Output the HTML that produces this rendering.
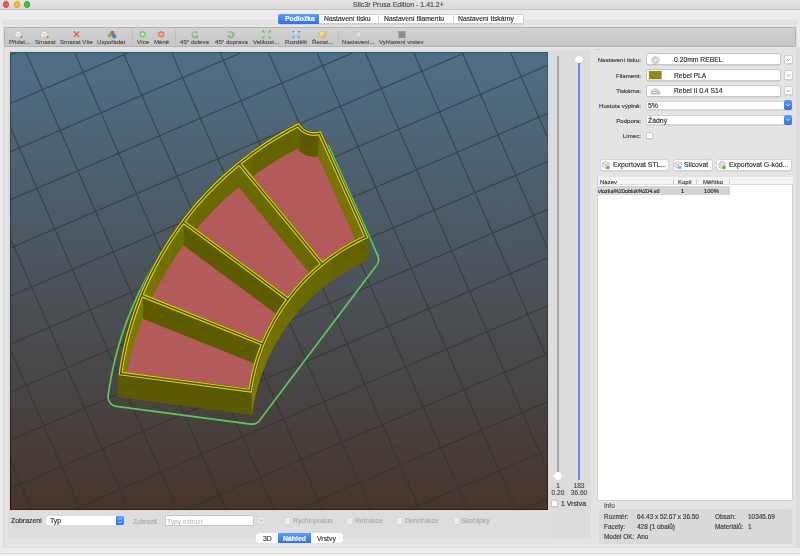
<!DOCTYPE html>
<html><head><meta charset="utf-8">
<style>
*{margin:0;padding:0;box-sizing:border-box}
html,body{width:800px;height:556px;overflow:hidden;-webkit-font-smoothing:antialiased;background:#ececec;font-family:"Liberation Sans",sans-serif;color:#2b2b2b}
.a{position:absolute}
.t{position:absolute;white-space:nowrap;line-height:1;will-change:transform;-webkit-text-stroke:0.15px currentColor}
#title{left:0;top:0;width:800px;height:10px;background:linear-gradient(#e4e4e4,#d9d9d9);border-bottom:1px solid #c4c4c4}
.tl{position:absolute;top:1.4px;width:6.4px;height:6.4px;border-radius:50%}
#outer{left:3px;top:17.5px;width:794px;height:530.5px;background:#e4e4e4;border:1px solid #dddddd;border-top-color:#f2f2f2;border-radius:2px}
#toolbar{left:4px;top:26.5px;width:792px;height:20.5px;background:linear-gradient(#d3d3d3,#c6c6c6);border:1px solid #b4b4b4;border-radius:1px}
.tb{font-size:6.1px;color:#4d4d4d;top:39.2px}
.sep{position:absolute;top:30px;width:1px;height:14px;background:#bdbdbd}
#inner{left:8px;top:49.5px;width:583px;height:488.5px;background:#dddddd;border-radius:2px}
#vp{left:10px;top:52px;width:538px;height:458px}
.lbl{font-size:6.1px;color:#3a3a3a;text-align:right}
.combo{position:absolute;background:#fff;border:1px solid #cfcfcf;border-radius:2px;box-shadow:0 0.5px 0.5px rgba(0,0,0,.12)}
.dd{position:absolute;background:#fff;border:1px solid #d0d0d0;border-radius:2px;box-shadow:0 0.5px 0.5px rgba(0,0,0,.12)}
.bluebtn{position:absolute;background:linear-gradient(#5b9bf8,#2a6ff0);border-radius:2px}
.ctext{font-size:7px;color:#2e2e2e}
.btn{position:absolute;background:#fff;border:1px solid #d4d4d4;border-radius:3px;box-shadow:0 0.5px 0.5px rgba(0,0,0,.1)}
.cb{position:absolute;background:#fff;border:0.6px solid #c4c4c4;border-radius:1.5px;box-shadow:0 0.4px 0.4px rgba(0,0,0,.12)}
.cbd{position:absolute;background:#ececec;border:1px solid #d6d6d6;border-radius:1.5px}
.gray{color:#a9a9a9}
</style></head><body>
<div id="title" class="a">
  <div class="tl" style="left:3px;background:#f25a52;border:0.5px solid #de4740"></div>
  <div class="tl" style="left:13.5px;background:#f7bd2e;border:0.5px solid #dea123"></div>
  <div class="tl" style="left:23.8px;background:#3fc53a;border:0.5px solid #2fab2c"></div>
  <div class="t" style="left:353px;top:1px;font-size:7px;color:#4a4a4a">Slic3r Prusa Edition - 1.41.2+</div>
</div>
<div id="outer" class="a"></div>
<div id="toolbar" class="a"></div>
<!-- tabs -->
<div class="a" style="left:278px;top:13.8px;width:246px;height:10.4px;background:#fff;border:0.5px solid #cfcfcf;border-radius:2px;box-shadow:0 0.5px 0.5px rgba(0,0,0,.15)"></div>
<div class="a" style="left:278px;top:13.8px;width:41px;height:10.4px;background:linear-gradient(#5c9df8,#2d70ef);border-radius:2px 0 0 2px"></div>
<div class="a" style="left:378px;top:14.5px;width:0.5px;height:9px;background:#d8d8d8"></div>
<div class="a" style="left:452.6px;top:14.5px;width:0.5px;height:9px;background:#d8d8d8"></div>
<div class="t" style="left:285px;top:16.2px;font-size:6.8px;color:#fff;font-weight:bold">Podložka</div>
<div class="t" style="left:324px;top:16.2px;font-size:6.8px;color:#2b2b2b">Nastavení tisku</div>
<div class="t" style="left:384px;top:16.2px;font-size:6.8px;color:#2b2b2b">Nastavení filamentu</div>
<div class="t" style="left:458px;top:16.2px;font-size:6.8px;color:#2b2b2b">Nastavení tiskárny</div>


<div class="t tb" style="left:8.8px">Přidat...</div>
<div class="t tb" style="left:35px">Smazat</div>
<div class="t tb" style="left:60px">Smazat Vše</div>
<div class="t tb" style="left:97px">Uspořádat</div>
<div class="sep" style="left:132px"></div>
<div class="t tb" style="left:137px">Více</div>
<div class="t tb" style="left:154px">Méně</div>
<div class="sep" style="left:174.5px"></div>
<div class="t tb" style="left:179.5px">45° doleva</div>
<div class="t tb" style="left:215px">45° doprava</div>
<div class="t tb" style="left:253px">Velikost...</div>
<div class="t tb" style="left:285px">Rozdělit</div>
<div class="t tb" style="left:312px">Řezat...</div>
<div class="sep" style="left:338px"></div>
<div class="t tb" style="left:342px">Nastavení...</div>
<div class="t tb" style="left:379px">Vyhlazení vrstev</div>
<svg class="a" style="left:0;top:26px" width="440" height="20" viewBox="0 26 440 20">
 <g stroke="#a9a9a9" stroke-width="0.45">
  <path d="M14.8,32.6 l3.4,-1.8 l3.4,1.8 v3.4 l-3.4,1.8 l-3.4,-1.8z" fill="#f2f2f2"/><path d="M14.8,32.6 l3.4,1.8 l3.4,-1.8 M18.2,34.4 v3.4" fill="none"/>
  <path d="M40.8,32.6 l3.4,-1.8 l3.4,1.8 v3.4 l-3.4,1.8 l-3.4,-1.8z" fill="#f2f2f2"/><path d="M40.8,32.6 l3.4,1.8 l3.4,-1.8 M44.2,34.4 v3.4" fill="none"/>
 </g>
 <circle cx="21.3" cy="37" r="1.7" fill="#5cae45" stroke="#fff" stroke-width="0.4"/>
 <circle cx="47.6" cy="37.1" r="1.7" fill="#e8772a" stroke="#fff" stroke-width="0.4"/>
 <path d="M73.8,31.6 l5.4,5.4 M79.2,31.6 l-5.4,5.4" stroke="#ee5a5a" stroke-width="1.4"/>
 <circle cx="112.3" cy="33" r="2.2" fill="#e05252"/><circle cx="109.6" cy="35.6" r="1.8" fill="#62b455"/><circle cx="114.3" cy="36.4" r="2.1" fill="#3f7fd6"/>
 <circle cx="142.7" cy="34.3" r="3" fill="#82cc70" stroke="#62ae52" stroke-width="0.3"/><path d="M141,34.3h3.4M142.7,32.6v3.4" stroke="#fff" stroke-width="0.8"/>
 <circle cx="161.2" cy="34.3" r="3" fill="#ee7f72" stroke="#d65a4e" stroke-width="0.3"/><path d="M159.5,34.3h3.4" stroke="#fff" stroke-width="0.8"/>
 <defs><radialGradient id="gg" cx="0.4" cy="0.35" r="0.7"><stop offset="0" stop-color="#b8e6a4"/><stop offset="1" stop-color="#6fbb5d"/></radialGradient>
 <radialGradient id="yg" cx="0.4" cy="0.35" r="0.7"><stop offset="0" stop-color="#fff0b8"/><stop offset="1" stop-color="#e9b444"/></radialGradient>
 <radialGradient id="bgx" cx="0.4" cy="0.35" r="0.7"><stop offset="0" stop-color="#d8e8fb"/><stop offset="1" stop-color="#8fb3e6"/></radialGradient></defs>
 <path d="M196.6,36.8 A2.6,2.6 0 1 1 197.1,33" fill="none" stroke="url(#gg)" stroke-width="1.8"/><path d="M195.4,35.2 l3.2,0.2 l-1.5,2.8z" fill="#74bd62"/>
 <path d="M229.2,36.8 A2.6,2.6 0 1 0 228.7,33" fill="none" stroke="url(#gg)" stroke-width="1.8"/><path d="M230.4,35.2 l-3.2,0.2 l1.5,2.8z" fill="#74bd62"/>
 <g stroke="#7cc46a" stroke-width="1.4" fill="none"><path d="M262.6,30.8 l2,2 M270.4,30.8 l-2,2 M262.6,38.2 l2,-2 M270.4,38.2 l-2,-2"/></g>
 <g fill="#7cc46a"><path d="M262,30.2h2.6l-2.6,2.6z"/><path d="M271,30.2h-2.6l2.6,2.6z"/><path d="M262,38.8h2.6l-2.6,-2.6z"/><path d="M271,38.8h-2.6l2.6,-2.6z"/></g>
 <path d="M293.2,32.2 l3,-1.4 l3,1.4 v4.2 l-3,1.4 l-3,-1.4z" fill="url(#bgx)"/>
 <g fill="#222"><circle cx="293.3" cy="31.6" r="0.55"/><circle cx="299.2" cy="31.6" r="0.55"/><circle cx="293.3" cy="37.3" r="0.55"/><circle cx="299.2" cy="37.3" r="0.55"/></g>
 <path d="M319.2,32.6 l3.3,-1.8 l3.3,1.8 v3.6 l-3.3,1.8 l-3.3,-1.8z" fill="url(#yg)" stroke="#dba640" stroke-width="0.4"/><path d="M319.2,32.6 l3.3,1.8 l3.3,-1.8 M322.5,34.4 v3.6" fill="none" stroke="#e0a83c" stroke-width="0.35"/>
 <circle cx="358.6" cy="34.5" r="2.5" fill="#ececec" stroke="#bcbcbc" stroke-width="1.1" stroke-dasharray="1 0.6"/><circle cx="358.6" cy="34.5" r="0.9" fill="#d0d0d0"/>
 <rect x="398.8" y="31.5" width="6.4" height="6.3" fill="#8e8e8e" stroke="#7a7a7a" stroke-width="0.3"/>
</svg>

<div id="inner" class="a"></div>
<svg class="a" style="left:10px;top:52px" width="538" height="458" viewBox="10 52 538 458">
<defs><linearGradient id="bg" x1="0" y1="0" x2="0" y2="1"><stop offset="0" stop-color="#4f6f86"/><stop offset="1" stop-color="#46352c"/></linearGradient></defs>
<rect x="10" y="52" width="538" height="458" fill="url(#bg)"/>
<path d="M-643.6,-146.5L-22.4,1271.5M-602.6,-164.0L18.4,1253.9M-561.7,-181.5L59.1,1236.4M-520.8,-199.1L99.9,1218.8M-479.8,-216.6L140.7,1201.2M-438.9,-234.1L181.4,1183.7M-398.0,-251.6L222.2,1166.1M-357.1,-269.2L262.9,1148.6M-316.2,-286.7L303.7,1131.0M-275.3,-304.2L344.4,1113.5M-234.4,-321.7L385.2,1095.9M-193.5,-339.2L425.9,1078.4M-152.6,-356.7L466.6,1060.8M-111.7,-374.2L507.3,1043.3M-70.8,-391.7L548.0,1025.7M-29.9,-409.2L588.8,1008.2M10.9,-426.7L629.5,990.7M51.8,-444.2L670.2,973.1M92.7,-461.7L710.9,955.6M133.5,-479.2L751.5,938.1M174.3,-496.7L792.2,920.6M215.2,-514.2L832.9,903.0M256.0,-531.6L873.6,885.5M296.9,-549.1L914.2,868.0M337.7,-566.6L954.9,850.5M378.5,-584.1L995.6,833.0M419.3,-601.6L1036.2,815.4M460.1,-619.0L1076.9,797.9M500.9,-636.5L1117.5,780.4M541.7,-654.0L1158.1,762.9M582.5,-671.4L1198.8,745.4M623.3,-688.9L1239.4,727.9M-643.6,-146.5L664.1,-706.3M-625.8,-105.8L681.7,-665.8M-608.0,-65.2L699.4,-625.2M-590.2,-24.6L717.0,-584.6M-572.4,16.0L734.7,-544.0M-554.6,56.6L752.3,-503.4M-536.8,97.2L769.9,-462.9M-519.1,137.8L787.6,-422.3M-501.3,178.4L805.2,-381.8M-483.5,219.0L822.8,-341.2M-465.7,259.5L840.5,-300.7M-448.0,300.1L858.1,-260.2M-430.2,340.7L875.7,-219.6M-412.4,381.2L893.3,-179.1M-394.7,421.7L910.9,-138.6M-376.9,462.3L928.5,-98.1M-359.2,502.8L946.1,-57.6M-341.4,543.3L963.7,-17.1M-323.7,583.8L981.3,23.3M-305.9,624.4L998.9,63.8M-288.2,664.9L1016.5,104.3M-270.4,705.3L1034.1,144.7M-252.7,745.8L1051.7,185.2M-235.0,786.3L1069.3,225.6M-217.2,826.8L1086.8,266.1M-199.5,867.2L1104.4,306.5M-181.8,907.7L1122.0,346.9M-164.1,948.2L1139.6,387.3M-146.4,988.6L1157.1,427.8M-128.6,1029.0L1174.7,468.2M-110.9,1069.5L1192.2,508.5M-93.2,1109.9L1209.8,548.9M-75.5,1150.3L1227.4,589.3M-57.8,1190.7L1244.9,629.7M-40.1,1231.1L1262.5,670.1" stroke="#2c2e30" stroke-opacity="0.62" stroke-width="1.15" fill="none"/>
<defs><pattern id="pk" patternUnits="userSpaceOnUse" width="2" height="2" patternTransform="skewX(-25)"><rect width="2" height="2" fill="#b95e5e"/><rect width="1" height="1" fill="#a65252"/></pattern><clipPath id="c0"><path d="M249.00,383.89 L249.82,379.57 L250.73,375.26 L251.74,370.97 L252.85,366.70 L254.04,362.46 L255.33,358.25 L256.71,354.07 L258.19,349.91 L259.75,345.79 L259.96,345.27 L142.93,298.23 L142.08,300.34 L139.55,307.01 L137.17,313.73 L134.94,320.50 L132.85,327.32 L130.92,334.18 L129.13,341.08 L127.50,348.01 L126.02,354.98 L124.69,361.98 L123.52,369.01 L123.13,371.69 L248.27,388.23Z"/></clipPath><clipPath id="c1"><path d="M263.14,337.65 L264.97,333.64 L266.89,329.67 L268.89,325.74 L270.98,321.86 L273.15,318.02 L275.41,314.23 L277.75,310.49 L280.17,306.80 L282.67,303.16 L285.01,299.90 L183.76,225.00 L183.32,225.59 L179.15,231.38 L175.10,237.26 L171.19,243.23 L167.41,249.29 L163.76,255.42 L160.24,261.63 L156.86,267.91 L153.62,274.27 L150.52,280.69 L147.56,287.18 L144.75,293.73 L144.59,294.14 L261.63,341.18Z"/></clipPath><clipPath id="c2"><path d="M287.90,296.05 L290.64,292.58 L293.44,289.18 L296.33,285.83 L299.28,282.54 L302.31,279.33 L305.40,276.17 L308.57,273.09 L311.80,270.07 L315.09,267.12 L318.45,264.25 L319.03,263.77 L239.04,166.80 L237.04,168.44 L231.61,173.09 L226.28,177.85 L221.05,182.73 L215.93,187.73 L210.92,192.83 L206.03,198.03 L201.25,203.35 L196.59,208.76 L192.04,214.27 L187.62,219.88 L186.42,221.47 L287.67,296.36Z"/></clipPath><clipPath id="c3"><path d="M325.36,258.72 L328.90,256.07 L332.50,253.49 L336.15,251.00 L339.86,248.58 L343.62,246.24 L347.43,243.99 L351.28,241.82 L355.19,239.73 L359.14,237.72 L363.12,235.81 L318.28,135.76 L317.99,135.81 L317.89,135.83 L317.49,135.90 L317.38,135.92 L316.98,135.98 L316.87,136.00 L316.47,136.05 L316.37,136.06 L315.96,136.10 L315.86,136.11 L315.45,136.14 L315.34,136.15 L314.94,136.17 L314.83,136.17 L314.43,136.18 L314.32,136.18 L313.92,136.19 L313.81,136.18 L313.40,136.18 L313.29,136.17 L312.89,136.15 L312.78,136.15 L312.38,136.12 L312.27,136.11 L311.87,136.07 L311.76,136.06 L311.36,136.01 L311.25,136.00 L310.85,135.94 L310.74,135.92 L310.35,135.86 L310.24,135.84 L309.84,135.76 L309.73,135.74 L309.34,135.65 L309.23,135.63 L308.84,135.53 L308.74,135.50 L308.35,135.40 L308.24,135.37 L307.86,135.25 L307.75,135.22 L307.37,135.10 L307.26,135.06 L306.88,134.93 L306.78,134.89 L306.40,134.75 L306.30,134.71 L305.93,134.55 L305.83,134.51 L305.46,134.35 L305.36,134.31 L304.99,134.14 L304.90,134.09 L304.53,133.91 L304.44,133.86 L304.08,133.67 L303.98,133.62 L303.63,133.42 L303.54,133.37 L303.19,133.16 L303.10,133.11 L302.76,132.89 L302.66,132.83 L302.33,132.61 L302.24,132.55 L301.91,132.32 L301.82,132.26 L301.49,132.02 L301.41,131.96 L301.09,131.71 L301.00,131.64 L300.69,131.39 L300.60,131.32 L300.30,131.06 L300.22,130.99 L299.91,130.72 L299.83,130.65 L299.54,130.37 L299.46,130.29 L299.18,130.01 L299.10,129.93 L298.82,129.65 L298.75,129.57 L298.47,129.27 L298.40,129.19 L298.14,128.89 L298.07,128.80 L297.81,128.49 L297.74,128.41 L297.59,128.22 L296.47,128.78 L290.16,132.16 L283.91,135.67 L277.75,139.32 L271.67,143.10 L265.67,147.01 L259.76,151.04 L253.94,155.21 L248.21,159.50 L242.58,163.91 L242.47,163.99 L322.47,260.98Z"/></clipPath></defs><path d="M302.37,134.67 L302.15,134.59 L301.92,134.52 L301.70,134.45 L301.47,134.39 L301.23,134.33 L301.00,134.28 L300.77,134.23 L300.53,134.19 L300.30,134.16 L300.06,134.13 L299.83,134.10 L299.59,134.09 L299.35,134.07 L299.11,134.07 L298.88,134.07 L298.64,134.07 L298.40,134.08 L298.16,134.10 L297.93,134.12 L297.69,134.15 L297.46,134.18 L297.22,134.22 L296.99,134.27 L296.76,134.32 L296.52,134.38 L296.29,134.44 L296.07,134.51 L295.84,134.58 L295.62,134.66 L295.39,134.74 L295.17,134.83 L294.96,134.92 L294.74,135.02 L294.53,135.13 L289.75,137.55 L289.56,137.65 L283.16,141.07 L282.97,141.18 L276.65,144.74 L276.46,144.84 L270.22,148.54 L270.04,148.65 L263.87,152.48 L263.69,152.59 L257.62,156.55 L257.44,156.67 L251.45,160.76 L251.28,160.88 L245.38,165.10 L245.21,165.23 L239.40,169.57 L239.23,169.70 L233.52,174.17 L233.36,174.31 L227.75,178.90 L227.58,179.03 L222.08,183.75 L221.92,183.89 L216.51,188.72 L216.36,188.86 L211.06,193.80 L210.91,193.95 L205.72,199.01 L205.57,199.16 L200.49,204.33 L200.35,204.48 L195.39,209.76 L195.24,209.91 L190.40,215.30 L190.26,215.45 L185.53,220.94 L185.40,221.10 L180.79,226.69 L180.66,226.85 L176.18,232.54 L176.05,232.71 L171.69,238.49 L171.57,238.66 L167.34,244.53 L167.22,244.70 L163.12,250.67 L163.00,250.84 L159.03,256.89 L158.92,257.07 L155.08,263.20 L154.97,263.38 L151.28,269.60 L151.17,269.78 L147.61,276.07 L147.51,276.26 L144.08,282.63 L143.98,282.82 L140.70,289.26 L140.61,289.45 L137.46,295.96 L137.37,296.15 L134.38,302.72 L134.29,302.92 L131.44,309.56 L131.36,309.75 L128.65,316.45 L128.57,316.65 L126.01,323.40 L125.94,323.60 L123.52,330.41 L123.46,330.61 L121.19,337.47 L121.13,337.67 L119.02,344.58 L118.96,344.78 L117.00,351.74 L116.94,351.94 L115.13,358.93 L115.08,359.14 L113.43,366.17 L113.38,366.37 L111.88,373.44 L111.84,373.64 L110.49,380.74 L110.46,380.95 L109.27,388.07 L109.23,388.28 L108.20,395.42 L108.17,395.66 L108.14,395.90 L108.12,396.14 L108.11,396.38 L108.10,396.62 L108.10,396.86 L108.11,397.10 L108.12,397.34 L108.13,397.57 L108.15,397.81 L108.18,398.05 L108.22,398.29 L108.26,398.53 L108.30,398.76 L108.36,399.00 L108.41,399.23 L108.48,399.46 L108.55,399.69 L108.62,399.92 L108.70,400.15 L108.79,400.37 L108.88,400.59 L108.98,400.81 L109.08,401.03 L109.19,401.24 L109.30,401.46 L109.42,401.66 L109.54,401.87 L109.67,402.07 L109.80,402.27 L109.94,402.47 L110.09,402.66 L110.24,402.85 L110.39,403.04 L110.55,403.22 L110.71,403.40 L110.87,403.57 L111.05,403.74 L111.22,403.91 L111.40,404.07 L111.58,404.23 L111.77,404.38 L111.96,404.53 L112.15,404.67 L112.35,404.81 L112.55,404.94 L112.76,405.07 L112.96,405.19 L113.17,405.31 L113.39,405.43 L113.60,405.53 L113.82,405.64 L114.04,405.73 L114.27,405.82 L114.49,405.91 L114.72,405.99 L114.95,406.07 L115.18,406.14 L115.42,406.20 L115.65,406.26 L115.89,406.31 L116.12,406.36 L116.36,406.40 L116.60,406.43 L250.56,424.13 L250.80,424.16 L251.04,424.18 L251.28,424.20 L251.52,424.21 L251.76,424.21 L252.00,424.21 L252.25,424.21 L252.49,424.19 L252.73,424.17 L252.97,424.15 L253.21,424.12 L253.45,424.08 L253.68,424.04 L253.92,423.99 L254.15,423.94 L254.39,423.88 L254.62,423.82 L254.85,423.75 L255.08,423.67 L255.31,423.59 L255.53,423.50 L255.75,423.41 L255.97,423.31 L256.19,423.21 L256.41,423.10 L256.62,422.98 L256.83,422.86 L257.03,422.74 L257.24,422.61 L257.44,422.48 L257.63,422.34 L257.82,422.19 L258.01,422.04 L258.20,421.89 L258.38,421.73 L258.56,421.57 L258.73,421.41 L258.90,421.23 L259.07,421.06 L259.23,420.88 L259.38,420.70 L259.53,420.51 L259.68,420.32 L376.60,265.15 L376.74,264.96 L376.88,264.76 L377.01,264.56 L377.14,264.36 L377.26,264.15 L377.38,263.94 L377.49,263.73 L377.59,263.52 L377.70,263.30 L377.79,263.08 L377.88,262.86 L377.97,262.63 L378.05,262.41 L378.12,262.18 L378.19,261.95 L378.25,261.72 L378.30,261.48 L378.35,261.25 L378.40,261.02 L378.44,260.78 L378.47,260.54 L378.50,260.30 L378.52,260.07 L378.53,259.83 L378.54,259.59 L378.55,259.35 L378.54,259.11 L378.53,258.87 L378.52,258.63 L378.50,258.39 L378.47,258.15 L378.44,257.92 L378.40,257.68 L378.36,257.44 L378.31,257.21 L378.25,256.98 L378.19,256.75 L378.12,256.52 L378.05,256.29 L377.97,256.06 L377.89,255.84 L377.80,255.61 L377.70,255.39 L329.46,147.76 L329.36,147.54 L329.26,147.33 L329.15,147.12 L329.03,146.92 L328.91,146.71 L328.79,146.51 L328.66,146.32 L328.53,146.12 L328.39,145.93 L328.25,145.75 L328.10,145.56 L327.95,145.38 L327.79,145.20 L327.63,145.03 L327.47,144.86 L327.30,144.70 L327.12,144.54 L326.95,144.38 L326.77,144.23 L326.58,144.08 L326.40,143.94 L326.21,143.80 L326.01,143.66 L325.81,143.53 L325.61,143.41 L325.41,143.29 L325.20,143.18 L325.00,143.06 L324.78,142.96 L324.57,142.86 L324.35,142.77 L324.13,142.68 L323.91,142.59Z" fill="none" stroke="#5acb5a" stroke-width="1.7"/>
<path d="M294.20,146.20 L287.80,149.62 L281.48,153.18 L275.23,156.88 L269.07,160.71 L262.99,164.67 L257.00,168.76 L251.10,172.98 L245.30,177.33 L239.59,181.80 L233.98,186.39 L228.47,191.10 L223.06,195.93 L217.77,200.88 L212.58,205.94 L207.50,211.11 L202.54,216.39 L197.70,221.77 L192.97,227.26 L188.37,232.84 L183.89,238.53 L179.53,244.31 L175.30,250.18 L171.20,256.14 L167.24,262.19 L163.40,268.33 L159.70,274.54 L156.14,280.84 L152.72,287.20 L149.43,293.65 L146.29,300.16 L143.29,306.73 L140.44,313.37 L137.73,320.07 L135.17,326.83 L132.76,333.64 L130.49,340.50 L128.38,347.41 L126.42,354.36 L124.61,361.35 L122.96,368.38 L121.46,375.45 L120.11,382.54 L118.92,389.66 L117.89,396.81 L251.85,414.51 L252.46,410.24 L253.18,406.00 L253.98,401.76 L254.87,397.55 L255.86,393.35 L256.94,389.18 L258.11,385.03 L259.37,380.91 L260.72,376.82 L262.16,372.75 L263.69,368.72 L265.31,364.72 L267.01,360.76 L268.80,356.84 L270.68,352.95 L272.63,349.11 L274.68,345.31 L276.80,341.55 L279.01,337.85 L281.30,334.19 L283.67,330.58 L286.11,327.02 L288.63,323.51 L291.23,320.06 L293.91,316.67 L296.65,313.34 L299.47,310.06 L302.36,306.85 L305.33,303.70 L308.35,300.62 L311.45,297.60 L314.61,294.65 L317.83,291.76 L321.12,288.95 L324.47,286.21 L327.87,283.54 L331.34,280.95 L334.86,278.43 L338.43,275.99 L342.06,273.62 L345.74,271.34 L349.46,269.13 L353.24,267.01 L357.06,264.96 L360.92,263.00 L364.82,261.13 L368.77,259.34 L320.52,151.70 L320.38,151.76 L320.00,151.92 L319.63,152.06 L319.25,152.20 L318.86,152.33 L318.48,152.44 L318.09,152.55 L317.70,152.65 L317.31,152.74 L316.91,152.82 L316.51,152.89 L316.11,152.95 L315.71,153.00 L315.31,153.04 L314.91,153.07 L314.51,153.09 L314.10,153.10 L313.70,153.10 L313.29,153.09 L312.89,153.08 L312.49,153.05 L312.09,153.01 L311.69,152.96 L311.29,152.90 L310.89,152.84 L310.49,152.76 L310.10,152.67 L309.71,152.58 L309.32,152.47 L308.93,152.36 L308.55,152.23 L308.16,152.10 L307.79,151.95 L307.41,151.80 L307.04,151.64 L306.68,151.47 L306.32,151.29 L305.96,151.10 L305.61,150.91 L305.26,150.70 L304.92,150.49 L304.58,150.27 L304.25,150.04 L303.93,149.80 L303.61,149.55 L303.29,149.30 L302.99,149.04 L302.69,148.77 L302.39,148.49 L302.11,148.21 L301.83,147.92 L301.56,147.63 L301.29,147.32 L301.03,147.01 L300.78,146.70 L300.54,146.38 L300.31,146.05 L300.08,145.72 L299.87,145.38 L299.66,145.04 L299.46,144.69 L299.26,144.34 L299.08,143.98 L298.98,143.78Z" fill="#5d5b00"/>
<path d="M294.20,146.20 L287.80,149.62 L288.00,128.29 L294.40,124.87Z" fill="#5d5b00"/>
<path d="M287.80,149.62 L281.48,153.18 L281.68,131.85 L288.00,128.29Z" fill="#5d5b00"/>
<path d="M281.48,153.18 L275.23,156.88 L275.43,135.55 L281.68,131.85Z" fill="#5d5b00"/>
<path d="M275.23,156.88 L269.07,160.71 L269.27,139.38 L275.43,135.55Z" fill="#5d5b00"/>
<path d="M269.07,160.71 L262.99,164.67 L263.19,143.34 L269.27,139.38Z" fill="#5d5b00"/>
<path d="M262.99,164.67 L257.00,168.76 L257.20,147.43 L263.19,143.34Z" fill="#5d5b00"/>
<path d="M257.00,168.76 L251.10,172.98 L251.30,151.65 L257.20,147.43Z" fill="#5d5b00"/>
<path d="M251.10,172.98 L245.30,177.33 L245.50,156.00 L251.30,151.65Z" fill="#5d5b00"/>
<path d="M245.30,177.33 L239.59,181.80 L239.79,160.47 L245.50,156.00Z" fill="#5d5b00"/>
<path d="M239.59,181.80 L233.98,186.39 L234.18,165.06 L239.79,160.47Z" fill="#5d5b00"/>
<path d="M233.98,186.39 L228.47,191.10 L228.67,169.77 L234.18,165.06Z" fill="#5d5b00"/>
<path d="M228.47,191.10 L223.06,195.93 L223.26,174.60 L228.67,169.77Z" fill="#5d5b00"/>
<path d="M223.06,195.93 L217.77,200.88 L217.97,179.55 L223.26,174.60Z" fill="#5d5b00"/>
<path d="M217.77,200.88 L212.58,205.94 L212.78,184.61 L217.97,179.55Z" fill="#5d5b00"/>
<path d="M212.58,205.94 L207.50,211.11 L207.70,189.78 L212.78,184.61Z" fill="#5d5b00"/>
<path d="M207.50,211.11 L202.54,216.39 L202.74,195.06 L207.70,189.78Z" fill="#5d5b00"/>
<path d="M202.54,216.39 L197.70,221.77 L197.90,200.44 L202.74,195.06Z" fill="#5d5b00"/>
<path d="M197.70,221.77 L192.97,227.26 L193.17,205.93 L197.90,200.44Z" fill="#5d5b00"/>
<path d="M192.97,227.26 L188.37,232.84 L188.57,211.51 L193.17,205.93Z" fill="#5d5b00"/>
<path d="M188.37,232.84 L183.89,238.53 L184.09,217.20 L188.57,211.51Z" fill="#5d5b00"/>
<path d="M183.89,238.53 L179.53,244.31 L179.73,222.98 L184.09,217.20Z" fill="#5d5b00"/>
<path d="M179.53,244.31 L175.30,250.18 L175.50,228.85 L179.73,222.98Z" fill="#5d5b00"/>
<path d="M175.30,250.18 L171.20,256.14 L171.40,234.81 L175.50,228.85Z" fill="#5d5b00"/>
<path d="M171.20,256.14 L167.24,262.19 L167.44,240.86 L171.40,234.81Z" fill="#5d5b00"/>
<path d="M167.24,262.19 L163.40,268.33 L163.60,247.00 L167.44,240.86Z" fill="#5d5b00"/>
<path d="M163.40,268.33 L159.70,274.54 L159.90,253.21 L163.60,247.00Z" fill="#5d5b00"/>
<path d="M159.70,274.54 L156.14,280.84 L156.34,259.51 L159.90,253.21Z" fill="#5d5b00"/>
<path d="M156.14,280.84 L152.72,287.20 L152.92,265.87 L156.34,259.51Z" fill="#5d5b00"/>
<path d="M152.72,287.20 L149.43,293.65 L149.63,272.32 L152.92,265.87Z" fill="#5d5b00"/>
<path d="M149.43,293.65 L146.29,300.16 L146.49,278.83 L149.63,272.32Z" fill="#5d5b00"/>
<path d="M146.29,300.16 L143.29,306.73 L143.49,285.40 L146.49,278.83Z" fill="#5d5b00"/>
<path d="M143.29,306.73 L140.44,313.37 L140.64,292.04 L143.49,285.40Z" fill="#5d5b00"/>
<path d="M140.44,313.37 L137.73,320.07 L137.93,298.74 L140.64,292.04Z" fill="#5d5b00"/>
<path d="M137.73,320.07 L135.17,326.83 L135.37,305.50 L137.93,298.74Z" fill="#5d5b00"/>
<path d="M135.17,326.83 L132.76,333.64 L132.96,312.31 L135.37,305.50Z" fill="#5d5b00"/>
<path d="M132.76,333.64 L130.49,340.50 L130.69,319.17 L132.96,312.31Z" fill="#5d5b00"/>
<path d="M130.49,340.50 L128.38,347.41 L128.58,326.08 L130.69,319.17Z" fill="#5d5b00"/>
<path d="M128.38,347.41 L126.42,354.36 L126.62,333.03 L128.58,326.08Z" fill="#5d5b00"/>
<path d="M126.42,354.36 L124.61,361.35 L124.81,340.02 L126.62,333.03Z" fill="#5d5b00"/>
<path d="M124.61,361.35 L122.96,368.38 L123.16,347.05 L124.81,340.02Z" fill="#5d5b00"/>
<path d="M122.96,368.38 L121.46,375.45 L121.66,354.12 L123.16,347.05Z" fill="#5d5b00"/>
<path d="M121.46,375.45 L120.11,382.54 L120.31,361.21 L121.66,354.12Z" fill="#5d5b00"/>
<path d="M120.11,382.54 L118.92,389.66 L119.12,368.33 L120.31,361.21Z" fill="#5d5b00"/>
<path d="M118.92,389.66 L117.89,396.81 L118.09,375.48 L119.12,368.33Z" fill="#5d5b00"/>
<path d="M368.77,259.34 L320.52,151.70 L320.72,130.37 L368.97,238.01Z" fill="#5d5b00"/>
<path d="M320.52,151.70 L320.38,151.76 L320.58,130.43 L320.72,130.37Z" fill="#5d5b00"/>
<path d="M320.38,151.76 L320.00,151.92 L320.20,130.59 L320.58,130.43Z" fill="#5d5b00"/>
<path d="M320.00,151.92 L319.63,152.06 L319.83,130.73 L320.20,130.59Z" fill="#5d5b00"/>
<path d="M319.63,152.06 L319.25,152.20 L319.45,130.87 L319.83,130.73Z" fill="#5d5b00"/>
<path d="M319.25,152.20 L318.86,152.33 L319.06,131.00 L319.45,130.87Z" fill="#5d5b00"/>
<path d="M318.86,152.33 L318.48,152.44 L318.68,131.11 L319.06,131.00Z" fill="#5d5b00"/>
<path d="M318.48,152.44 L318.09,152.55 L318.29,131.22 L318.68,131.11Z" fill="#5d5b00"/>
<path d="M318.09,152.55 L317.70,152.65 L317.90,131.32 L318.29,131.22Z" fill="#5d5b00"/>
<path d="M317.70,152.65 L317.31,152.74 L317.51,131.41 L317.90,131.32Z" fill="#5d5b00"/>
<path d="M317.31,152.74 L316.91,152.82 L317.11,131.49 L317.51,131.41Z" fill="#5d5b00"/>
<path d="M316.91,152.82 L316.51,152.89 L316.71,131.56 L317.11,131.49Z" fill="#5d5b00"/>
<path d="M316.51,152.89 L316.11,152.95 L316.31,131.62 L316.71,131.56Z" fill="#5d5b00"/>
<path d="M316.11,152.95 L315.71,153.00 L315.91,131.67 L316.31,131.62Z" fill="#5d5b00"/>
<path d="M315.71,153.00 L315.31,153.04 L315.51,131.71 L315.91,131.67Z" fill="#5d5b00"/>
<path d="M315.31,153.04 L314.91,153.07 L315.11,131.74 L315.51,131.71Z" fill="#5d5b00"/>
<path d="M314.91,153.07 L314.51,153.09 L314.71,131.76 L315.11,131.74Z" fill="#5d5b00"/>
<path d="M314.51,153.09 L314.10,153.10 L314.30,131.77 L314.71,131.76Z" fill="#5d5b00"/>
<path d="M314.10,153.10 L313.70,153.10 L313.90,131.77 L314.30,131.77Z" fill="#5d5b00"/>
<path d="M313.70,153.10 L313.29,153.09 L313.49,131.76 L313.90,131.77Z" fill="#5d5b00"/>
<path d="M313.29,153.09 L312.89,153.08 L313.09,131.75 L313.49,131.76Z" fill="#5d5b00"/>
<path d="M312.89,153.08 L312.49,153.05 L312.69,131.72 L313.09,131.75Z" fill="#5d5b00"/>
<path d="M312.49,153.05 L312.09,153.01 L312.29,131.68 L312.69,131.72Z" fill="#5d5b00"/>
<path d="M312.09,153.01 L311.69,152.96 L311.89,131.63 L312.29,131.68Z" fill="#5d5b00"/>
<path d="M311.69,152.96 L311.29,152.90 L311.49,131.57 L311.89,131.63Z" fill="#5d5b00"/>
<path d="M311.29,152.90 L310.89,152.84 L311.09,131.51 L311.49,131.57Z" fill="#5d5b00"/>
<path d="M310.89,152.84 L310.49,152.76 L310.69,131.43 L311.09,131.51Z" fill="#5d5b00"/>
<path d="M310.49,152.76 L310.10,152.67 L310.30,131.34 L310.69,131.43Z" fill="#5d5b00"/>
<path d="M310.10,152.67 L309.71,152.58 L309.91,131.25 L310.30,131.34Z" fill="#5d5b00"/>
<path d="M309.71,152.58 L309.32,152.47 L309.52,131.14 L309.91,131.25Z" fill="#5d5b00"/>
<path d="M309.32,152.47 L308.93,152.36 L309.13,131.03 L309.52,131.14Z" fill="#5d5b00"/>
<path d="M308.93,152.36 L308.55,152.23 L308.75,130.90 L309.13,131.03Z" fill="#5d5b00"/>
<path d="M308.55,152.23 L308.16,152.10 L308.36,130.77 L308.75,130.90Z" fill="#5d5b00"/>
<path d="M308.16,152.10 L307.79,151.95 L307.99,130.62 L308.36,130.77Z" fill="#5d5b00"/>
<path d="M307.79,151.95 L307.41,151.80 L307.61,130.47 L307.99,130.62Z" fill="#5d5b00"/>
<path d="M307.41,151.80 L307.04,151.64 L307.24,130.31 L307.61,130.47Z" fill="#5d5b00"/>
<path d="M307.04,151.64 L306.68,151.47 L306.88,130.14 L307.24,130.31Z" fill="#5d5b00"/>
<path d="M306.68,151.47 L306.32,151.29 L306.52,129.96 L306.88,130.14Z" fill="#5d5b00"/>
<path d="M306.32,151.29 L305.96,151.10 L306.16,129.77 L306.52,129.96Z" fill="#5d5b00"/>
<path d="M305.96,151.10 L305.61,150.91 L305.81,129.58 L306.16,129.77Z" fill="#5d5b00"/>
<path d="M305.61,150.91 L305.26,150.70 L305.46,129.37 L305.81,129.58Z" fill="#5d5b00"/>
<path d="M305.26,150.70 L304.92,150.49 L305.12,129.16 L305.46,129.37Z" fill="#5d5b00"/>
<path d="M304.92,150.49 L304.58,150.27 L304.78,128.94 L305.12,129.16Z" fill="#5d5b00"/>
<path d="M304.58,150.27 L304.25,150.04 L304.45,128.71 L304.78,128.94Z" fill="#5d5b00"/>
<path d="M304.25,150.04 L303.93,149.80 L304.13,128.47 L304.45,128.71Z" fill="#5d5b00"/>
<path d="M303.93,149.80 L303.61,149.55 L303.81,128.22 L304.13,128.47Z" fill="#5d5b00"/>
<path d="M303.61,149.55 L303.29,149.30 L303.49,127.97 L303.81,128.22Z" fill="#5d5b00"/>
<path d="M303.29,149.30 L302.99,149.04 L303.19,127.71 L303.49,127.97Z" fill="#5d5b00"/>
<path d="M302.99,149.04 L302.69,148.77 L302.89,127.44 L303.19,127.71Z" fill="#5d5b00"/>
<path d="M302.69,148.77 L302.39,148.49 L302.59,127.16 L302.89,127.44Z" fill="#5d5b00"/>
<path d="M302.39,148.49 L302.11,148.21 L302.31,126.88 L302.59,127.16Z" fill="#5d5b00"/>
<path d="M302.11,148.21 L301.83,147.92 L302.03,126.59 L302.31,126.88Z" fill="#5d5b00"/>
<path d="M301.83,147.92 L301.56,147.63 L301.76,126.30 L302.03,126.59Z" fill="#5d5b00"/>
<path d="M301.56,147.63 L301.29,147.32 L301.49,125.99 L301.76,126.30Z" fill="#5d5b00"/>
<path d="M301.29,147.32 L301.03,147.01 L301.23,125.68 L301.49,125.99Z" fill="#5d5b00"/>
<path d="M301.03,147.01 L300.78,146.70 L300.98,125.37 L301.23,125.68Z" fill="#5d5b00"/>
<path d="M300.78,146.70 L300.54,146.38 L300.74,125.05 L300.98,125.37Z" fill="#5d5b00"/>
<path d="M300.54,146.38 L300.31,146.05 L300.51,124.72 L300.74,125.05Z" fill="#5d5b00"/>
<path d="M300.31,146.05 L300.08,145.72 L300.28,124.39 L300.51,124.72Z" fill="#5d5b00"/>
<path d="M300.08,145.72 L299.87,145.38 L300.07,124.05 L300.28,124.39Z" fill="#5d5b00"/>
<path d="M299.87,145.38 L299.66,145.04 L299.86,123.71 L300.07,124.05Z" fill="#5d5b00"/>
<path d="M299.66,145.04 L299.46,144.69 L299.66,123.36 L299.86,123.71Z" fill="#5d5b00"/>
<path d="M299.46,144.69 L299.26,144.34 L299.46,123.01 L299.66,123.36Z" fill="#5d5b00"/>
<path d="M299.26,144.34 L299.08,143.98 L299.28,122.65 L299.46,123.01Z" fill="#5d5b00"/>
<path d="M299.08,143.98 L298.98,143.78 L299.18,122.45 L299.28,122.65Z" fill="#5d5b00"/>
<path d="M298.98,143.78 L294.20,146.20 L294.40,124.87 L299.18,122.45Z" fill="#5d5b00"/>
<path d="M117.89,396.81 L251.85,414.51 L252.46,410.24 L253.18,406.00 L253.98,401.76 L254.87,397.55 L255.86,393.35 L256.94,389.18 L258.11,385.03 L259.37,380.91 L260.72,376.82 L262.16,372.75 L263.69,368.72 L265.31,364.72 L267.01,360.76 L268.80,356.84 L270.68,352.95 L272.63,349.11 L274.68,345.31 L276.80,341.55 L279.01,337.85 L281.30,334.19 L283.67,330.58 L286.11,327.02 L288.63,323.51 L291.23,320.06 L293.91,316.67 L296.65,313.34 L299.47,310.06 L302.36,306.85 L305.33,303.70 L308.35,300.62 L311.45,297.60 L314.61,294.65 L317.83,291.76 L321.12,288.95 L324.47,286.21 L327.87,283.54 L331.34,280.95 L334.86,278.43 L338.43,275.99 L342.06,273.62 L345.74,271.34 L349.46,269.13 L353.24,267.01 L357.06,264.96 L360.92,263.00 L364.82,261.13 L368.77,259.34 L368.97,238.01 L365.02,239.80 L361.12,241.67 L357.26,243.63 L353.44,245.68 L349.66,247.80 L345.94,250.01 L342.26,252.29 L338.63,254.66 L335.06,257.10 L331.54,259.62 L328.07,262.21 L324.67,264.88 L321.32,267.62 L318.03,270.43 L314.81,273.32 L311.65,276.27 L308.55,279.29 L305.53,282.37 L302.56,285.52 L299.67,288.73 L296.85,292.01 L294.11,295.34 L291.43,298.73 L288.83,302.18 L286.31,305.69 L283.87,309.25 L281.50,312.86 L279.21,316.52 L277.00,320.22 L274.88,323.98 L272.83,327.78 L270.88,331.62 L269.00,335.51 L267.21,339.43 L265.51,343.39 L263.89,347.39 L262.36,351.42 L260.92,355.49 L259.57,359.58 L258.31,363.70 L257.14,367.85 L256.06,372.02 L255.07,376.22 L254.18,380.43 L253.38,384.67 L252.66,388.91 L252.05,393.18 L118.09,375.48Z" fill="#6f6e00"/>
<path d="M117.89,396.81 L251.85,414.51 L252.05,393.18 L118.09,375.48Z" fill="#5b5a00" stroke="#5b5a00" stroke-width="0.25"/>
<path d="M251.85,414.51 L252.46,410.24 L253.18,406.00 L253.98,401.76 L254.87,397.55 L255.07,376.22 L254.18,380.43 L253.38,384.67 L252.66,388.91 L252.05,393.18Z" fill="#807f00" stroke="#807f00" stroke-width="0.25"/>
<path d="M254.87,397.55 L255.86,393.35 L256.94,389.18 L258.11,385.03 L259.37,380.91 L259.57,359.58 L258.31,363.70 L257.14,367.85 L256.06,372.02 L255.07,376.22Z" fill="#7d7b00" stroke="#7d7b00" stroke-width="0.25"/>
<path d="M259.37,380.91 L260.72,376.82 L262.16,372.75 L263.69,368.72 L265.31,364.72 L265.51,343.39 L263.89,347.39 L262.36,351.42 L260.92,355.49 L259.57,359.58Z" fill="#797800" stroke="#797800" stroke-width="0.25"/>
<path d="M265.31,364.72 L267.01,360.76 L268.80,356.84 L270.68,352.95 L272.63,349.11 L272.83,327.78 L270.88,331.62 L269.00,335.51 L267.21,339.43 L265.51,343.39Z" fill="#767400" stroke="#767400" stroke-width="0.25"/>
<path d="M272.63,349.11 L274.68,345.31 L276.80,341.55 L279.01,337.85 L281.30,334.19 L281.50,312.86 L279.21,316.52 L277.00,320.22 L274.88,323.98 L272.83,327.78Z" fill="#727100" stroke="#727100" stroke-width="0.25"/>
<path d="M281.30,334.19 L283.67,330.58 L286.11,327.02 L288.63,323.51 L291.23,320.06 L293.91,316.67 L294.11,295.34 L291.43,298.73 L288.83,302.18 L286.31,305.69 L283.87,309.25 L281.50,312.86Z" fill="#6e6d00" stroke="#6e6d00" stroke-width="0.25"/>
<path d="M293.91,316.67 L296.65,313.34 L299.47,310.06 L302.36,306.85 L305.33,303.70 L308.35,300.62 L311.45,297.60 L311.65,276.27 L308.55,279.29 L305.53,282.37 L302.56,285.52 L299.67,288.73 L296.85,292.01 L294.11,295.34Z" fill="#6b6a00" stroke="#6b6a00" stroke-width="0.25"/>
<path d="M311.45,297.60 L314.61,294.65 L317.83,291.76 L321.12,288.95 L324.47,286.21 L327.87,283.54 L331.34,280.95 L331.54,259.62 L328.07,262.21 L324.67,264.88 L321.32,267.62 L318.03,270.43 L314.81,273.32 L311.65,276.27Z" fill="#686700" stroke="#686700" stroke-width="0.25"/>
<path d="M331.34,280.95 L334.86,278.43 L338.43,275.99 L342.06,273.62 L345.74,271.34 L349.46,269.13 L353.24,267.01 L357.06,264.96 L360.92,263.00 L361.12,241.67 L357.26,243.63 L353.44,245.68 L349.66,247.80 L345.94,250.01 L342.26,252.29 L338.63,254.66 L335.06,257.10 L331.54,259.62Z" fill="#646300" stroke="#646300" stroke-width="0.25"/>
<path d="M360.92,263.00 L364.82,261.13 L368.77,259.34 L368.97,238.01 L365.02,239.80 L361.12,241.67Z" fill="#626100" stroke="#626100" stroke-width="0.25"/>
<path d="M294.40,124.87 L288.00,128.29 L281.68,131.85 L275.43,135.55 L269.27,139.38 L263.19,143.34 L257.20,147.43 L251.30,151.65 L245.50,156.00 L239.79,160.47 L234.18,165.06 L228.67,169.77 L223.26,174.60 L217.97,179.55 L212.78,184.61 L207.70,189.78 L202.74,195.06 L197.90,200.44 L193.17,205.93 L188.57,211.51 L184.09,217.20 L179.73,222.98 L175.50,228.85 L171.40,234.81 L167.44,240.86 L163.60,247.00 L159.90,253.21 L156.34,259.51 L152.92,265.87 L149.63,272.32 L146.49,278.83 L143.49,285.40 L140.64,292.04 L137.93,298.74 L135.37,305.50 L132.96,312.31 L130.69,319.17 L128.58,326.08 L126.62,333.03 L124.81,340.02 L123.16,347.05 L121.66,354.12 L120.31,361.21 L119.12,368.33 L118.09,375.48 L252.05,393.18 L252.66,388.91 L253.38,384.67 L254.18,380.43 L255.07,376.22 L256.06,372.02 L257.14,367.85 L258.31,363.70 L259.57,359.58 L260.92,355.49 L262.36,351.42 L263.89,347.39 L265.51,343.39 L267.21,339.43 L269.00,335.51 L270.88,331.62 L272.83,327.78 L274.88,323.98 L277.00,320.22 L279.21,316.52 L281.50,312.86 L283.87,309.25 L286.31,305.69 L288.83,302.18 L291.43,298.73 L294.11,295.34 L296.85,292.01 L299.67,288.73 L302.56,285.52 L305.53,282.37 L308.55,279.29 L311.65,276.27 L314.81,273.32 L318.03,270.43 L321.32,267.62 L324.67,264.88 L328.07,262.21 L331.54,259.62 L335.06,257.10 L338.63,254.66 L342.26,252.29 L345.94,250.01 L349.66,247.80 L353.44,245.68 L357.26,243.63 L361.12,241.67 L365.02,239.80 L368.97,238.01 L320.72,130.37 L320.58,130.43 L320.20,130.59 L319.83,130.73 L319.45,130.87 L319.06,131.00 L318.68,131.11 L318.29,131.22 L317.90,131.32 L317.51,131.41 L317.11,131.49 L316.71,131.56 L316.31,131.62 L315.91,131.67 L315.51,131.71 L315.11,131.74 L314.71,131.76 L314.30,131.77 L313.90,131.77 L313.49,131.76 L313.09,131.75 L312.69,131.72 L312.29,131.68 L311.89,131.63 L311.49,131.57 L311.09,131.51 L310.69,131.43 L310.30,131.34 L309.91,131.25 L309.52,131.14 L309.13,131.03 L308.75,130.90 L308.36,130.77 L307.99,130.62 L307.61,130.47 L307.24,130.31 L306.88,130.14 L306.52,129.96 L306.16,129.77 L305.81,129.58 L305.46,129.37 L305.12,129.16 L304.78,128.94 L304.45,128.71 L304.13,128.47 L303.81,128.22 L303.49,127.97 L303.19,127.71 L302.89,127.44 L302.59,127.16 L302.31,126.88 L302.03,126.59 L301.76,126.30 L301.49,125.99 L301.23,125.68 L300.98,125.37 L300.74,125.05 L300.51,124.72 L300.28,124.39 L300.07,124.05 L299.86,123.71 L299.66,123.36 L299.46,123.01 L299.28,122.65 L299.18,122.45Z" fill="#5a4a14" stroke="#3c4a40" stroke-width="0.6"/>
<g clip-path="url(#c0)">
<path d="M249.00,383.89 L249.82,379.57 L250.73,375.26 L251.74,370.97 L252.85,366.70 L254.04,362.46 L255.33,358.25 L256.71,354.07 L258.19,349.91 L259.75,345.79 L259.96,345.27 L142.93,298.23 L142.08,300.34 L139.55,307.01 L137.17,313.73 L134.94,320.50 L132.85,327.32 L130.92,334.18 L129.13,341.08 L127.50,348.01 L126.02,354.98 L124.69,361.98 L123.52,369.01 L123.13,371.69 L248.27,388.23Z" fill="#666400"/>
<path d="M259.77,365.78 L142.74,318.74 L141.88,320.86 L139.36,327.52 L136.98,334.24 L134.74,341.01 L132.66,347.83 L130.72,354.69 L128.94,361.59 L127.31,368.52 L125.83,375.49 L124.50,382.49 L123.32,389.52 L122.94,392.20 L123.13,371.69 L123.52,369.01 L124.69,361.98 L126.02,354.98 L127.50,348.01 L129.13,341.08 L130.92,334.18 L132.85,327.32 L134.94,320.50 L137.17,313.73 L139.55,307.01 L142.08,300.34 L142.93,298.23 L259.96,345.27Z" fill="#7a7900"/>
<path d="M259.77,365.78 L142.74,318.74 L142.93,298.23 L259.96,345.27Z" fill="#5c5b00" stroke="#5c5b00" stroke-width="0.25"/>
<path d="M142.74,318.74 L141.88,320.86 L139.36,327.52 L136.98,334.24 L134.74,341.01 L134.94,320.50 L137.17,313.73 L139.55,307.01 L142.08,300.34 L142.93,298.23Z" fill="#797800" stroke="#797800" stroke-width="0.25"/>
<path d="M134.74,341.01 L132.66,347.83 L130.72,354.69 L128.94,361.59 L127.31,368.52 L127.50,348.01 L129.13,341.08 L130.92,334.18 L132.85,327.32 L134.94,320.50Z" fill="#7d7b00" stroke="#7d7b00" stroke-width="0.25"/>
<path d="M127.31,368.52 L125.83,375.49 L124.50,382.49 L123.32,389.52 L122.94,392.20 L123.13,371.69 L123.52,369.01 L124.69,361.98 L126.02,354.98 L127.50,348.01Z" fill="#807f00" stroke="#807f00" stroke-width="0.25"/>
<path d="M248.81,404.41 L249.63,400.08 L250.54,395.77 L251.55,391.48 L252.66,387.22 L253.85,382.98 L255.14,378.76 L256.52,374.58 L257.99,370.42 L259.56,366.30 L259.77,365.78 L142.74,318.74 L141.88,320.86 L139.36,327.52 L136.98,334.24 L134.74,341.01 L132.66,347.83 L130.72,354.69 L128.94,361.59 L127.31,368.52 L125.83,375.49 L124.50,382.49 L123.32,389.52 L122.94,392.20 L248.08,408.74Z" fill="url(#pk)"/>
</g>
<g clip-path="url(#c1)">
<path d="M263.14,337.65 L264.97,333.64 L266.89,329.67 L268.89,325.74 L270.98,321.86 L273.15,318.02 L275.41,314.23 L277.75,310.49 L280.17,306.80 L282.67,303.16 L285.01,299.90 L183.76,225.00 L183.32,225.59 L179.15,231.38 L175.10,237.26 L171.19,243.23 L167.41,249.29 L163.76,255.42 L160.24,261.63 L156.86,267.91 L153.62,274.27 L150.52,280.69 L147.56,287.18 L144.75,293.73 L144.59,294.14 L261.63,341.18Z" fill="#666400"/>
<path d="M284.82,320.41 L183.57,245.52 L183.13,246.10 L178.96,251.89 L174.91,257.78 L171.00,263.75 L167.21,269.80 L163.56,275.93 L160.05,282.14 L156.67,288.42 L153.43,294.78 L150.33,301.20 L147.37,307.69 L144.56,314.25 L144.39,314.65 L144.59,294.14 L144.75,293.73 L147.56,287.18 L150.52,280.69 L153.62,274.27 L156.86,267.91 L160.24,261.63 L163.76,255.42 L167.41,249.29 L171.19,243.23 L175.10,237.26 L179.15,231.38 L183.32,225.59 L183.76,225.00 L285.01,299.90Z" fill="#717000"/>
<path d="M284.82,320.41 L183.57,245.52 L183.76,225.00 L285.01,299.90Z" fill="#5c5b00" stroke="#5c5b00" stroke-width="0.25"/>
<path d="M183.57,245.52 L183.13,246.10 L178.96,251.89 L174.91,257.78 L171.00,263.75 L171.19,243.23 L175.10,237.26 L179.15,231.38 L183.32,225.59 L183.76,225.00Z" fill="#6e6d00" stroke="#6e6d00" stroke-width="0.25"/>
<path d="M171.00,263.75 L167.21,269.80 L163.56,275.93 L160.05,282.14 L156.67,288.42 L156.86,267.91 L160.24,261.63 L163.76,255.42 L167.41,249.29 L171.19,243.23Z" fill="#727100" stroke="#727100" stroke-width="0.25"/>
<path d="M156.67,288.42 L153.43,294.78 L150.33,301.20 L147.37,307.69 L144.56,314.25 L144.75,293.73 L147.56,287.18 L150.52,280.69 L153.62,274.27 L156.86,267.91Z" fill="#767400" stroke="#767400" stroke-width="0.25"/>
<path d="M144.56,314.25 L144.39,314.65 L144.59,294.14 L144.75,293.73Z" fill="#787600" stroke="#787600" stroke-width="0.25"/>
<path d="M262.95,358.17 L264.78,354.15 L266.69,350.18 L268.70,346.25 L270.79,342.37 L272.96,338.53 L275.21,334.74 L277.55,331.00 L279.97,327.31 L282.47,323.67 L284.82,320.41 L183.57,245.52 L183.13,246.10 L178.96,251.89 L174.91,257.78 L171.00,263.75 L167.21,269.80 L163.56,275.93 L160.05,282.14 L156.67,288.42 L153.43,294.78 L150.33,301.20 L147.37,307.69 L144.56,314.25 L144.39,314.65 L261.43,361.69Z" fill="url(#pk)"/>
</g>
<g clip-path="url(#c2)">
<path d="M287.90,296.05 L290.64,292.58 L293.44,289.18 L296.33,285.83 L299.28,282.54 L302.31,279.33 L305.40,276.17 L308.57,273.09 L311.80,270.07 L315.09,267.12 L318.45,264.25 L319.03,263.77 L239.04,166.80 L237.04,168.44 L231.61,173.09 L226.28,177.85 L221.05,182.73 L215.93,187.73 L210.92,192.83 L206.03,198.03 L201.25,203.35 L196.59,208.76 L192.04,214.27 L187.62,219.88 L186.42,221.47 L287.67,296.36Z" fill="#666400"/>
<path d="M318.84,284.28 L238.85,187.31 L236.85,188.95 L231.42,193.60 L226.09,198.37 L220.86,203.25 L215.74,208.24 L210.73,213.34 L205.84,218.55 L201.06,223.86 L196.39,229.27 L191.85,234.78 L187.43,240.39 L186.23,241.98 L186.42,221.47 L187.62,219.88 L192.04,214.27 L196.59,208.76 L201.25,203.35 L206.03,198.03 L210.92,192.83 L215.93,187.73 L221.05,182.73 L226.28,177.85 L231.61,173.09 L237.04,168.44 L239.04,166.80 L319.03,263.77Z" fill="#6a6900"/>
<path d="M318.84,284.28 L238.85,187.31 L236.85,188.95 L231.42,193.60 L226.09,198.37 L220.86,203.25 L215.74,208.24 L210.73,213.34 L205.84,218.55 L201.06,223.86 L196.39,229.27 L196.59,208.76 L201.25,203.35 L206.03,198.03 L210.92,192.83 L215.93,187.73 L221.05,182.73 L226.28,177.85 L231.61,173.09 L237.04,168.44 L239.04,166.80 L319.03,263.77Z" fill="#6a6800" stroke="#6a6800" stroke-width="0.25"/>
<path d="M196.39,229.27 L191.85,234.78 L187.43,240.39 L186.23,241.98 L186.42,221.47 L187.62,219.88 L192.04,214.27 L196.59,208.76Z" fill="#6d6b00" stroke="#6d6b00" stroke-width="0.25"/>
<path d="M287.71,316.56 L290.44,313.10 L293.25,309.69 L296.13,306.34 L299.09,303.06 L302.11,299.84 L305.21,296.68 L308.37,293.60 L311.61,290.58 L314.90,287.63 L318.26,284.76 L318.84,284.28 L238.85,187.31 L236.85,188.95 L231.42,193.60 L226.09,198.37 L220.86,203.25 L215.74,208.24 L210.73,213.34 L205.84,218.55 L201.06,223.86 L196.39,229.27 L191.85,234.78 L187.43,240.39 L186.23,241.98 L287.48,316.87Z" fill="url(#pk)"/>
</g>
<g clip-path="url(#c3)">
<path d="M325.36,258.72 L328.90,256.07 L332.50,253.49 L336.15,251.00 L339.86,248.58 L343.62,246.24 L347.43,243.99 L351.28,241.82 L355.19,239.73 L359.14,237.72 L363.12,235.81 L318.28,135.76 L317.99,135.81 L317.89,135.83 L317.49,135.90 L317.38,135.92 L316.98,135.98 L316.87,136.00 L316.47,136.05 L316.37,136.06 L315.96,136.10 L315.86,136.11 L315.45,136.14 L315.34,136.15 L314.94,136.17 L314.83,136.17 L314.43,136.18 L314.32,136.18 L313.92,136.19 L313.81,136.18 L313.40,136.18 L313.29,136.17 L312.89,136.15 L312.78,136.15 L312.38,136.12 L312.27,136.11 L311.87,136.07 L311.76,136.06 L311.36,136.01 L311.25,136.00 L310.85,135.94 L310.74,135.92 L310.35,135.86 L310.24,135.84 L309.84,135.76 L309.73,135.74 L309.34,135.65 L309.23,135.63 L308.84,135.53 L308.74,135.50 L308.35,135.40 L308.24,135.37 L307.86,135.25 L307.75,135.22 L307.37,135.10 L307.26,135.06 L306.88,134.93 L306.78,134.89 L306.40,134.75 L306.30,134.71 L305.93,134.55 L305.83,134.51 L305.46,134.35 L305.36,134.31 L304.99,134.14 L304.90,134.09 L304.53,133.91 L304.44,133.86 L304.08,133.67 L303.98,133.62 L303.63,133.42 L303.54,133.37 L303.19,133.16 L303.10,133.11 L302.76,132.89 L302.66,132.83 L302.33,132.61 L302.24,132.55 L301.91,132.32 L301.82,132.26 L301.49,132.02 L301.41,131.96 L301.09,131.71 L301.00,131.64 L300.69,131.39 L300.60,131.32 L300.30,131.06 L300.22,130.99 L299.91,130.72 L299.83,130.65 L299.54,130.37 L299.46,130.29 L299.18,130.01 L299.10,129.93 L298.82,129.65 L298.75,129.57 L298.47,129.27 L298.40,129.19 L298.14,128.89 L298.07,128.80 L297.81,128.49 L297.74,128.41 L297.59,128.22 L296.47,128.78 L290.16,132.16 L283.91,135.67 L277.75,139.32 L271.67,143.10 L265.67,147.01 L259.76,151.04 L253.94,155.21 L248.21,159.50 L242.58,163.91 L242.47,163.99 L322.47,260.98Z" fill="#666400"/>
<path d="M362.93,256.32 L318.08,156.27 L317.80,156.33 L317.69,156.35 L317.30,156.42 L317.19,156.43 L316.79,156.49 L316.68,156.51 L316.28,156.56 L316.17,156.57 L315.77,156.61 L315.66,156.62 L315.26,156.65 L315.15,156.66 L314.75,156.68 L314.64,156.68 L314.24,156.69 L314.13,156.70 L313.72,156.70 L313.61,156.70 L313.21,156.69 L313.10,156.68 L312.70,156.67 L312.59,156.66 L312.19,156.63 L312.08,156.62 L311.68,156.58 L311.57,156.57 L311.17,156.52 L311.06,156.51 L310.66,156.45 L310.55,156.44 L310.15,156.37 L310.05,156.35 L309.65,156.27 L309.54,156.25 L309.15,156.16 L309.04,156.14 L308.65,156.04 L308.54,156.02 L308.15,155.91 L308.05,155.88 L307.66,155.76 L307.56,155.73 L307.18,155.61 L307.07,155.57 L306.69,155.44 L306.59,155.40 L306.21,155.26 L306.11,155.22 L305.74,155.07 L305.64,155.02 L305.27,154.86 L305.17,154.82 L304.80,154.65 L304.70,154.60 L304.34,154.42 L304.24,154.37 L303.89,154.18 L303.79,154.13 L303.44,153.93 L303.35,153.88 L303.00,153.68 L302.91,153.62 L302.56,153.41 L302.47,153.35 L302.14,153.12 L302.05,153.06 L301.71,152.83 L301.63,152.77 L301.30,152.53 L301.21,152.47 L300.89,152.22 L300.81,152.15 L300.50,151.90 L300.41,151.83 L300.10,151.57 L300.02,151.50 L299.72,151.23 L299.64,151.16 L299.35,150.88 L299.27,150.81 L298.98,150.52 L298.91,150.45 L298.63,150.16 L298.55,150.08 L298.28,149.78 L298.21,149.70 L297.94,149.40 L297.87,149.32 L297.62,149.01 L297.55,148.92 L297.39,148.73 L296.28,149.29 L289.96,152.67 L283.72,156.18 L277.56,159.83 L271.48,163.61 L265.48,167.52 L259.57,171.56 L253.75,175.72 L248.02,180.01 L242.39,184.42 L242.28,184.51 L242.47,163.99 L242.58,163.91 L248.21,159.50 L253.94,155.21 L259.76,151.04 L265.67,147.01 L271.67,143.10 L277.75,139.32 L283.91,135.67 L290.16,132.16 L296.47,128.78 L297.59,128.22 L297.74,128.41 L297.81,128.49 L298.07,128.80 L298.14,128.89 L298.40,129.19 L298.47,129.27 L298.75,129.57 L298.82,129.65 L299.10,129.93 L299.18,130.01 L299.46,130.29 L299.54,130.37 L299.83,130.65 L299.91,130.72 L300.22,130.99 L300.30,131.06 L300.60,131.32 L300.69,131.39 L301.00,131.64 L301.09,131.71 L301.41,131.96 L301.49,132.02 L301.82,132.26 L301.91,132.32 L302.24,132.55 L302.33,132.61 L302.66,132.83 L302.76,132.89 L303.10,133.11 L303.19,133.16 L303.54,133.37 L303.63,133.42 L303.98,133.62 L304.08,133.67 L304.44,133.86 L304.53,133.91 L304.90,134.09 L304.99,134.14 L305.36,134.31 L305.46,134.35 L305.83,134.51 L305.93,134.55 L306.30,134.71 L306.40,134.75 L306.78,134.89 L306.88,134.93 L307.26,135.06 L307.37,135.10 L307.75,135.22 L307.86,135.25 L308.24,135.37 L308.35,135.40 L308.74,135.50 L308.84,135.53 L309.23,135.63 L309.34,135.65 L309.73,135.74 L309.84,135.76 L310.24,135.84 L310.35,135.86 L310.74,135.92 L310.85,135.94 L311.25,136.00 L311.36,136.01 L311.76,136.06 L311.87,136.07 L312.27,136.11 L312.38,136.12 L312.78,136.15 L312.89,136.15 L313.29,136.17 L313.40,136.18 L313.81,136.18 L313.92,136.19 L314.32,136.18 L314.43,136.18 L314.83,136.17 L314.94,136.17 L315.34,136.15 L315.45,136.14 L315.86,136.11 L315.96,136.10 L316.37,136.06 L316.47,136.05 L316.87,136.00 L316.98,135.98 L317.38,135.92 L317.49,135.90 L317.89,135.83 L317.99,135.81 L318.28,135.76 L363.12,235.81Z" fill="#5f5e00"/>
<path d="M362.93,256.32 L318.08,156.27 L318.28,135.76 L363.12,235.81Z" fill="#777500" stroke="#777500" stroke-width="0.25"/>
<path d="M318.08,156.27 L317.80,156.33 L317.69,156.35 L317.30,156.42 L317.19,156.43 L316.79,156.49 L316.68,156.51 L316.28,156.56 L316.17,156.57 L315.77,156.61 L315.66,156.62 L315.26,156.65 L315.15,156.66 L314.75,156.68 L314.64,156.68 L314.83,136.17 L314.94,136.17 L315.34,136.15 L315.45,136.14 L315.86,136.11 L315.96,136.10 L316.37,136.06 L316.47,136.05 L316.87,136.00 L316.98,135.98 L317.38,135.92 L317.49,135.90 L317.89,135.83 L317.99,135.81 L318.28,135.76Z" fill="#5d5c00" stroke="#5d5c00" stroke-width="0.25"/>
<path d="M314.64,156.68 L314.24,156.69 L314.13,156.70 L313.72,156.70 L313.61,156.70 L313.21,156.69 L313.10,156.68 L312.70,156.67 L312.59,156.66 L312.19,156.63 L312.08,156.62 L311.68,156.58 L311.57,156.57 L311.17,156.52 L311.06,156.51 L310.66,156.45 L310.55,156.44 L310.15,156.37 L310.05,156.35 L309.65,156.27 L309.54,156.25 L309.15,156.16 L309.04,156.14 L308.65,156.04 L308.54,156.02 L308.15,155.91 L308.05,155.88 L307.66,155.76 L307.56,155.73 L307.18,155.61 L307.07,155.57 L306.69,155.44 L306.59,155.40 L306.21,155.26 L306.11,155.22 L305.74,155.07 L305.64,155.02 L305.27,154.86 L305.17,154.82 L304.80,154.65 L304.70,154.60 L304.34,154.42 L304.24,154.37 L303.89,154.18 L303.79,154.13 L303.44,153.93 L303.35,153.88 L303.00,153.68 L302.91,153.62 L302.56,153.41 L302.47,153.35 L302.14,153.12 L302.05,153.06 L301.71,152.83 L301.63,152.77 L301.30,152.53 L301.21,152.47 L300.89,152.22 L300.81,152.15 L301.00,131.64 L301.09,131.71 L301.41,131.96 L301.49,132.02 L301.82,132.26 L301.91,132.32 L302.24,132.55 L302.33,132.61 L302.66,132.83 L302.76,132.89 L303.10,133.11 L303.19,133.16 L303.54,133.37 L303.63,133.42 L303.98,133.62 L304.08,133.67 L304.44,133.86 L304.53,133.91 L304.90,134.09 L304.99,134.14 L305.36,134.31 L305.46,134.35 L305.83,134.51 L305.93,134.55 L306.30,134.71 L306.40,134.75 L306.78,134.89 L306.88,134.93 L307.26,135.06 L307.37,135.10 L307.75,135.22 L307.86,135.25 L308.24,135.37 L308.35,135.40 L308.74,135.50 L308.84,135.53 L309.23,135.63 L309.34,135.65 L309.73,135.74 L309.84,135.76 L310.24,135.84 L310.35,135.86 L310.74,135.92 L310.85,135.94 L311.25,136.00 L311.36,136.01 L311.76,136.06 L311.87,136.07 L312.27,136.11 L312.38,136.12 L312.78,136.15 L312.89,136.15 L313.29,136.17 L313.40,136.18 L313.81,136.18 L313.92,136.19 L314.32,136.18 L314.43,136.18 L314.83,136.17Z" fill="#5c5a00" stroke="#5c5a00" stroke-width="0.25"/>
<path d="M300.81,152.15 L300.50,151.90 L300.41,151.83 L300.10,151.57 L300.02,151.50 L299.72,151.23 L299.91,130.72 L300.22,130.99 L300.30,131.06 L300.60,131.32 L300.69,131.39 L301.00,131.64Z" fill="#605f00" stroke="#605f00" stroke-width="0.25"/>
<path d="M299.72,151.23 L299.64,151.16 L299.35,150.88 L299.27,150.81 L298.98,150.52 L298.91,150.45 L299.10,129.93 L299.18,130.01 L299.46,130.29 L299.54,130.37 L299.83,130.65 L299.91,130.72Z" fill="#636200" stroke="#636200" stroke-width="0.25"/>
<path d="M298.91,150.45 L298.63,150.16 L298.55,150.08 L298.28,149.78 L298.21,149.70 L297.94,149.40 L298.14,128.89 L298.40,129.19 L298.47,129.27 L298.75,129.57 L298.82,129.65 L299.10,129.93Z" fill="#666500" stroke="#666500" stroke-width="0.25"/>
<path d="M297.94,149.40 L297.87,149.32 L297.62,149.01 L297.55,148.92 L297.39,148.73 L297.59,128.22 L297.74,128.41 L297.81,128.49 L298.07,128.80 L298.14,128.89Z" fill="#696800" stroke="#696800" stroke-width="0.25"/>
<path d="M297.39,148.73 L296.28,149.29 L289.96,152.67 L283.72,156.18 L277.56,159.83 L271.48,163.61 L265.48,167.52 L259.57,171.56 L253.75,175.72 L253.94,155.21 L259.76,151.04 L265.67,147.01 L271.67,143.10 L277.75,139.32 L283.91,135.67 L290.16,132.16 L296.47,128.78 L297.59,128.22Z" fill="#646300" stroke="#646300" stroke-width="0.25"/>
<path d="M253.75,175.72 L248.02,180.01 L242.39,184.42 L242.28,184.51 L242.47,163.99 L242.58,163.91 L248.21,159.50 L253.94,155.21Z" fill="#676600" stroke="#676600" stroke-width="0.25"/>
<path d="M325.16,279.23 L328.71,276.58 L332.30,274.00 L335.96,271.51 L339.66,269.09 L343.42,266.75 L347.23,264.50 L351.09,262.33 L355.00,260.24 L358.94,258.23 L362.93,256.32 L318.08,156.27 L317.80,156.33 L317.69,156.35 L317.30,156.42 L317.19,156.43 L316.79,156.49 L316.68,156.51 L316.28,156.56 L316.17,156.57 L315.77,156.61 L315.66,156.62 L315.26,156.65 L315.15,156.66 L314.75,156.68 L314.64,156.68 L314.24,156.69 L314.13,156.70 L313.72,156.70 L313.61,156.70 L313.21,156.69 L313.10,156.68 L312.70,156.67 L312.59,156.66 L312.19,156.63 L312.08,156.62 L311.68,156.58 L311.57,156.57 L311.17,156.52 L311.06,156.51 L310.66,156.45 L310.55,156.44 L310.15,156.37 L310.05,156.35 L309.65,156.27 L309.54,156.25 L309.15,156.16 L309.04,156.14 L308.65,156.04 L308.54,156.02 L308.15,155.91 L308.05,155.88 L307.66,155.76 L307.56,155.73 L307.18,155.61 L307.07,155.57 L306.69,155.44 L306.59,155.40 L306.21,155.26 L306.11,155.22 L305.74,155.07 L305.64,155.02 L305.27,154.86 L305.17,154.82 L304.80,154.65 L304.70,154.60 L304.34,154.42 L304.24,154.37 L303.89,154.18 L303.79,154.13 L303.44,153.93 L303.35,153.88 L303.00,153.68 L302.91,153.62 L302.56,153.41 L302.47,153.35 L302.14,153.12 L302.05,153.06 L301.71,152.83 L301.63,152.77 L301.30,152.53 L301.21,152.47 L300.89,152.22 L300.81,152.15 L300.50,151.90 L300.41,151.83 L300.10,151.57 L300.02,151.50 L299.72,151.23 L299.64,151.16 L299.35,150.88 L299.27,150.81 L298.98,150.52 L298.91,150.45 L298.63,150.16 L298.55,150.08 L298.28,149.78 L298.21,149.70 L297.94,149.40 L297.87,149.32 L297.62,149.01 L297.55,148.92 L297.39,148.73 L296.28,149.29 L289.96,152.67 L283.72,156.18 L277.56,159.83 L271.48,163.61 L265.48,167.52 L259.57,171.56 L253.75,175.72 L248.02,180.01 L242.39,184.42 L242.28,184.51 L322.28,281.49Z" fill="url(#pk)"/>
</g>
<path d="M294.82,125.65 L288.43,129.07 L282.12,132.62 L275.90,136.30 L269.75,140.12 L263.69,144.07 L257.71,148.16 L251.83,152.36 L246.04,156.70 L240.34,161.16 L234.75,165.74 L229.26,170.44 L223.87,175.25 L218.58,180.19 L213.41,185.23 L208.35,190.39 L203.40,195.65 L198.57,201.02 L193.85,206.49 L189.26,212.06 L184.79,217.73 L180.45,223.50 L176.23,229.36 L172.14,235.30 L168.19,241.34 L164.36,247.45 L160.67,253.65 L157.12,259.93 L153.71,266.28 L150.43,272.71 L147.30,279.20 L144.31,285.76 L141.46,292.38 L138.76,299.06 L136.20,305.80 L133.80,312.59 L131.54,319.44 L129.44,326.33 L127.48,333.26 L125.68,340.23 L124.03,347.24 L122.53,354.29 L121.19,361.36 L120.00,368.47 L119.10,374.72 L251.29,392.19 L251.79,388.78 L252.50,384.51 L253.31,380.26 L254.21,376.03 L255.20,371.81 L256.28,367.62 L257.46,363.45 L258.72,359.31 L260.08,355.20 L261.53,351.12 L263.06,347.07 L264.69,343.06 L266.40,339.08 L268.19,335.13 L270.08,331.23 L272.05,327.37 L274.10,323.56 L276.23,319.78 L278.45,316.06 L280.75,312.38 L283.13,308.76 L285.58,305.18 L288.12,301.66 L290.73,298.20 L293.41,294.79 L296.17,291.44 L299.00,288.15 L301.91,284.93 L304.88,281.76 L307.92,278.66 L311.03,275.63 L314.21,272.67 L317.45,269.77 L320.75,266.95 L324.11,264.19 L327.53,261.51 L331.01,258.91 L334.54,256.38 L338.13,253.93 L341.78,251.55 L345.47,249.26 L349.21,247.04 L353.01,244.91 L356.84,242.85 L360.72,240.88 L364.64,239.00 L367.80,237.57 L320.26,131.51 L320.14,131.56 L319.74,131.70 L319.34,131.84 L318.93,131.96 L318.52,132.07 L318.11,132.18 L317.69,132.27 L317.28,132.36 L316.86,132.43 L316.44,132.49 L316.01,132.55 L315.59,132.59 L315.17,132.62 L314.74,132.64 L314.32,132.65 L313.89,132.66 L313.47,132.65 L313.04,132.63 L312.62,132.60 L312.19,132.56 L311.77,132.51 L311.35,132.45 L310.93,132.37 L310.51,132.29 L310.10,132.20 L309.68,132.10 L309.27,131.99 L308.86,131.87 L308.46,131.74 L308.06,131.59 L307.66,131.44 L307.27,131.28 L306.88,131.11 L306.49,130.93 L306.11,130.75 L305.73,130.55 L305.36,130.34 L305.00,130.12 L304.64,129.90 L304.28,129.67 L303.93,129.42 L303.59,129.17 L303.25,128.91 L302.92,128.65 L302.60,128.37 L302.28,128.09 L301.98,127.80 L301.67,127.50 L301.38,127.20 L301.09,126.88 L300.81,126.56 L300.54,126.24 L300.28,125.91 L300.02,125.57 L299.78,125.22 L299.54,124.87 L299.31,124.52 L299.09,124.15 L298.88,123.79 L298.80,123.64Z" fill="none" stroke="#d6d800" stroke-width="1.2" stroke-linejoin="round"/>
<path d="M249.87,384.05 L250.69,379.74 L251.60,375.45 L252.61,371.18 L253.71,366.93 L254.90,362.71 L256.18,358.52 L257.56,354.35 L259.02,350.21 L260.58,346.11 L261.12,344.78 L142.44,297.08 L141.25,300.02 L138.71,306.71 L136.33,313.45 L134.09,320.23 L132.00,327.07 L130.06,333.95 L128.27,340.86 L126.63,347.82 L125.15,354.81 L123.82,361.83 L122.64,368.87 L122.12,372.45 L249.01,389.22Z" fill="none" stroke="#d6d800" stroke-width="1.2" stroke-linejoin="round"/>
<path d="M263.95,338.01 L265.78,334.02 L267.68,330.06 L269.68,326.15 L271.76,322.28 L273.92,318.46 L276.17,314.69 L278.50,310.96 L280.91,307.29 L283.40,303.66 L286.24,299.71 L183.58,223.77 L182.60,225.06 L178.42,230.87 L174.36,236.77 L170.44,242.76 L166.65,248.83 L162.99,254.98 L159.46,261.20 L156.07,267.51 L152.83,273.88 L149.72,280.32 L146.75,286.83 L143.93,293.40 L143.43,294.62 L262.10,342.32Z" fill="none" stroke="#d6d800" stroke-width="1.2" stroke-linejoin="round"/>
<path d="M288.61,296.59 L291.33,293.13 L294.13,289.74 L297.00,286.41 L299.94,283.14 L302.95,279.93 L306.03,276.79 L309.18,273.72 L312.40,270.72 L315.68,267.78 L319.03,264.92 L320.28,263.89 L239.17,165.56 L236.47,167.76 L231.02,172.43 L225.67,177.20 L220.43,182.10 L215.30,187.10 L210.28,192.22 L205.37,197.44 L200.58,202.76 L195.90,208.19 L191.35,213.72 L186.91,219.34 L185.18,221.65 L287.85,297.59Z" fill="none" stroke="#d6d800" stroke-width="1.2" stroke-linejoin="round"/>
<path d="M325.90,259.42 L329.43,256.78 L333.01,254.21 L336.65,251.73 L340.34,249.32 L344.08,247.00 L347.87,244.75 L351.71,242.59 L355.60,240.51 L359.53,238.51 L364.28,236.23 L318.80,134.75 L317.82,134.95 L317.73,134.97 L317.34,135.03 L317.24,135.05 L316.85,135.11 L316.76,135.12 L316.37,135.17 L316.27,135.18 L315.88,135.22 L315.78,135.23 L315.39,135.26 L315.29,135.27 L314.90,135.29 L314.80,135.29 L314.41,135.30 L314.31,135.30 L313.92,135.30 L313.82,135.30 L313.43,135.29 L313.33,135.29 L312.94,135.27 L312.84,135.27 L312.45,135.24 L312.35,135.23 L311.96,135.19 L311.86,135.18 L311.47,135.14 L311.37,135.12 L310.98,135.07 L310.89,135.05 L310.50,134.99 L310.40,134.97 L310.02,134.90 L309.92,134.88 L309.54,134.79 L309.44,134.77 L309.06,134.68 L308.97,134.65 L308.59,134.55 L308.49,134.52 L308.12,134.41 L308.02,134.38 L307.65,134.26 L307.56,134.23 L307.19,134.10 L307.09,134.06 L306.73,133.92 L306.63,133.89 L306.27,133.74 L306.18,133.70 L305.82,133.54 L305.73,133.50 L305.38,133.34 L305.29,133.30 L304.94,133.12 L304.85,133.08 L304.50,132.89 L304.42,132.85 L304.07,132.66 L303.99,132.61 L303.65,132.41 L303.57,132.36 L303.23,132.15 L303.15,132.10 L302.82,131.88 L302.74,131.83 L302.42,131.60 L302.34,131.55 L302.02,131.31 L301.95,131.25 L301.63,131.02 L301.56,130.96 L301.25,130.71 L301.18,130.65 L300.88,130.39 L300.81,130.33 L300.51,130.07 L300.44,130.00 L300.16,129.73 L300.09,129.66 L299.81,129.39 L299.74,129.32 L299.47,129.04 L299.40,128.97 L299.13,128.68 L299.07,128.61 L298.81,128.31 L298.75,128.24 L298.50,127.94 L298.43,127.86 L297.83,127.10 L296.06,128.00 L289.73,131.39 L283.47,134.91 L277.29,138.56 L271.19,142.35 L265.18,146.27 L259.25,150.32 L253.41,154.50 L247.67,158.80 L242.02,163.22 L241.22,163.87 L322.34,262.21Z" fill="none" stroke="#d6d800" stroke-width="1.2" stroke-linejoin="round"/>
<linearGradient id="lb" x1="0" y1="0" x2="0" y2="1"><stop offset="0" stop-color="#1d5470"/><stop offset="0.5" stop-color="#253844"/><stop offset="1" stop-color="#2a0808"/></linearGradient>
<rect x="10" y="52" width="1" height="458" fill="url(#lb)"/>
<rect x="10" y="52" width="538" height="1" fill="#1f5b78"/>
<rect x="10" y="509" width="538" height="1" fill="#3b1d06"/>
<rect x="547" y="52" width="1" height="458" fill="url(#lb)" opacity="0.6"/>
</svg>
<!-- slider panel -->
<div class="a" style="left:548px;top:50.2px;width:42.5px;height:487.8px;background:#dcdcdc;border-radius:0 2px 2px 0"></div>
<div class="a" style="left:557.3px;top:55.7px;width:1.7px;height:420px;background:#a6a6a6;border-radius:1px"></div>
<div class="a" style="left:578px;top:62px;width:1.7px;height:418.2px;background:#5b8cf3"></div>
<div class="a" style="left:554.1px;top:472.1px;width:8px;height:8px;border-radius:50%;background:#fff;box-shadow:0 0 0.6px rgba(0,0,0,.35)"></div>
<div class="a" style="left:575px;top:55.5px;width:7.6px;height:7.6px;border-radius:50%;background:#fff;box-shadow:0 0 0.6px rgba(0,0,0,.35)"></div>
<div class="t" style="left:548px;width:20px;text-align:center;top:482.6px;font-size:6.6px;color:#4a4a4a">1</div>
<div class="t" style="left:548px;width:20px;text-align:center;top:489.8px;font-size:6.6px;color:#4a4a4a">0.20</div>
<div class="t" style="left:568px;width:22px;text-align:center;top:482.6px;font-size:6.6px;color:#4a4a4a">183</div>
<div class="t" style="left:568px;width:22px;text-align:center;top:489.8px;font-size:6.6px;color:#4a4a4a">36.60</div>
<div class="cb" style="left:550.8px;top:500.4px;width:7px;height:6.9px"></div>
<div class="t" style="left:561px;top:501.2px;font-size:6.9px;color:#2f2f2f">1 Vrstva</div>
<div class="a" style="left:596.5px;top:48.5px;width:2.5px;height:1.5px;background:#bdbdbd"></div>
<div class="a" style="left:796.6px;top:47px;width:3.4px;height:501px;background:#dcdcdc"></div>
<!-- form -->
<div class="t lbl" style="left:580px;width:61px;top:57.2px">Nastavení tisku:</div>
<div class="t lbl" style="left:580px;width:61px;top:72.6px">Filament:</div>
<div class="t lbl" style="left:580px;width:61px;top:88px">Tiskárna:</div>
<div class="t lbl" style="left:580px;width:61px;top:103.3px">Hustota výplně:</div>
<div class="t lbl" style="left:580px;width:61px;top:118px">Podpora:</div>
<div class="t lbl" style="left:580px;width:61px;top:132.6px">Límec:</div>
<div class="combo" style="left:646.2px;top:53.4px;width:134.8px;height:12.1px;border-color:#c6c6c6"></div>
<div class="combo" style="left:646.2px;top:69.2px;width:134.8px;height:12.1px;border-color:#c6c6c6"></div>
<div class="combo" style="left:646.2px;top:84.8px;width:134.8px;height:12.1px;border-color:#c6c6c6"></div>
<div class="dd" style="left:783.5px;top:54.6px;width:9.7px;height:9.6px"></div>
<div class="dd" style="left:783.5px;top:70.2px;width:9.7px;height:9.6px"></div>
<div class="dd" style="left:783.5px;top:85.8px;width:9.7px;height:9.6px"></div>
<svg class="a" style="left:640px;top:50px" width="160" height="90" viewBox="640 50 160 90">
 <path d="M786.6,58.8 l1.8,1.8 l1.8,-1.8 M786.6,74.4 l1.8,1.8 l1.8,-1.8 M786.6,90 l1.8,1.8 l1.8,-1.8" fill="none" stroke="#555" stroke-width="0.6"/>
 <path d="M659.54,59.51 L659.54,60.89 L658.52,60.88 L658.12,61.85 L658.85,62.57 L657.87,63.55 L657.15,62.82 L656.18,63.22 L656.19,64.24 L654.81,64.24 L654.82,63.22 L653.85,62.82 L653.13,63.55 L652.15,62.57 L652.88,61.85 L652.48,60.88 L651.46,60.89 L651.46,59.51 L652.48,59.52 L652.88,58.55 L652.15,57.83 L653.13,56.85 L653.85,57.58 L654.82,57.18 L654.81,56.16 L656.19,56.16 L656.18,57.18 L657.15,57.58 L657.87,56.85 L658.85,57.83 L658.12,58.55 L658.52,59.52Z" fill="#d2d2d2" stroke="#b0b0b0" stroke-width="0.4"/><circle cx="655.5" cy="60.2" r="1.3" fill="#f4f4f4"/>
 <rect x="649.1" y="71.1" width="12.2" height="7.9" fill="#8e8d1d" stroke="#6c6b10" stroke-width="0.4"/>
 <path d="M651.6,91.8 q0.4,-3 3.9,-3.1 q3.5,0.1 3.9,3.1z" fill="#dcdcdc" stroke="#a8a8a8" stroke-width="0.45"/><rect x="651" y="91.6" width="9" height="2.6" rx="0.8" fill="#bdbdbd" stroke="#9a9a9a" stroke-width="0.35"/><rect x="652.2" y="92.3" width="6.6" height="0.7" fill="#f0f0f0"/>
</svg>
<div class="t ctext" style="left:673.6px;top:57px;font-size:6.75px">0.20mm REBEL</div>
<div class="t ctext" style="left:673.6px;top:72.8px;font-size:6.75px">Rebel PLA</div>
<div class="t ctext" style="left:673.6px;top:88.3px;font-size:6.75px">Rebel II 0.4 S14</div>
<div class="combo" style="left:645.7px;top:100.5px;width:146.5px;height:9.6px;border-radius:1.5px;border-color:#d6d6d6"></div>
<div class="combo" style="left:645.7px;top:115.2px;width:146.5px;height:9.6px;border-radius:1.5px;border-color:#d6d6d6"></div>
<div class="bluebtn" style="left:783.7px;top:100.2px;width:8.5px;height:9.9px"></div>
<div class="bluebtn" style="left:783.7px;top:114.9px;width:8.5px;height:9.9px"></div>
<svg class="a" style="left:780px;top:98px" width="16" height="30" viewBox="780 98 16 30">
 <path d="M786.2,104.2 l1.8,1.6 l1.8,-1.6 M786.2,118.9 l1.8,1.6 l1.8,-1.6" fill="none" stroke="#fff" stroke-width="0.8"/>
</svg>
<div class="t ctext" style="left:647.5px;top:103.2px;font-size:6.9px">5%</div>
<div class="t ctext" style="left:647.5px;top:117.8px;font-size:6.9px">Žádný</div>
<div class="cb" style="left:646.2px;top:131.6px;width:7.2px;height:7px"></div>
<!-- buttons -->
<div class="btn" style="left:599.9px;top:159.4px;width:69.2px;height:11.9px"></div>
<div class="btn" style="left:672.5px;top:159.4px;width:40.2px;height:11.9px"></div>
<div class="btn" style="left:716.1px;top:159.4px;width:76.4px;height:11.9px"></div>
<svg class="a" style="left:600px;top:158px" width="200" height="15" viewBox="600 158 200 15">
 <g stroke="#a0a0a0" stroke-width="0.5">
  <path d="M602.4,163 l3.3,-1.8 l3.3,1.8 v3.7 l-3.3,1.8 l-3.3,-1.8z" fill="#ececec"/><path d="M602.4,163 l3.3,1.8 l3.3,-1.8 M605.7,164.8 v3.7" fill="none"/>
  <path d="M674.8,163 l3.3,-1.8 l3.3,1.8 v3.7 l-3.3,1.8 l-3.3,-1.8z" fill="#ececec"/><path d="M674.8,163 l3.3,1.8 l3.3,-1.8 M678.1,164.8 v3.7" fill="none"/>
 </g>
 <circle cx="722" cy="165" r="3.5" fill="#dcdcdc" stroke="#a8a8a8" stroke-width="0.9" stroke-dasharray="1 0.5"/>
 <circle cx="607.8" cy="167.6" r="2" fill="#5fb04a" stroke="#fff" stroke-width="0.4"/>
 <ellipse cx="679.6" cy="167.5" rx="2.3" ry="1.7" fill="#78b2e8" stroke="#fff" stroke-width="0.4"/>
 <circle cx="724" cy="167.6" r="2" fill="#5fb04a" stroke="#fff" stroke-width="0.4"/>
</svg>
<div class="t" style="left:612.7px;top:162.4px;font-size:6.9px;color:#2e2e2e">Exportovat STL...</div>
<div class="t" style="left:684px;top:162.4px;font-size:6.9px;color:#2e2e2e">Slicovat</div>
<div class="t" style="left:728.5px;top:162.4px;font-size:6.9px;color:#2e2e2e">Exportovat G-kód...</div>
<!-- list -->
<div class="a" style="left:597.3px;top:176.6px;width:196px;height:324.6px;background:#fff;border:0.5px solid #d2d2d2"></div>
<div class="a" style="left:597.8px;top:177px;width:195px;height:8.4px;background:#f4f4f4;border-bottom:0.5px solid #dedede"></div>
<div class="a" style="left:673.2px;top:178.5px;width:0.6px;height:5.5px;background:#d0d0d0"></div>
<div class="a" style="left:696.2px;top:178.5px;width:0.6px;height:5.5px;background:#d0d0d0"></div>
<div class="a" style="left:729.4px;top:178.5px;width:0.6px;height:5.5px;background:#d0d0d0"></div>
<div class="t" style="left:599.5px;top:179.3px;font-size:6px;color:#3a3a3a">Název</div>
<div class="t" style="left:678px;top:179.3px;font-size:6px;color:#3a3a3a">Kopií</div>
<div class="t" style="left:702.7px;top:179.3px;font-size:6px;color:#3a3a3a">Měřítko</div>
<div class="a" style="left:597.8px;top:186px;width:131.8px;height:9.4px;background:#d4d4d4"></div>
<div class="t" style="left:597.6px;top:188.6px;font-size:5.55px;color:#2a2a2a">vlozka%20obluk%204.stl</div>
<div class="t" style="left:681.3px;top:188.6px;font-size:5.8px;color:#2a2a2a">1</div>
<div class="t" style="left:703.8px;top:188.6px;font-size:5.8px;color:#2a2a2a">100%</div>
<!-- info -->
<div class="t" style="left:603.8px;top:502.6px;font-size:6.45px;color:#555">Info</div>
<div class="a" style="left:598.5px;top:508.8px;width:193.5px;height:35px;background:#dadada;border-radius:2px"></div>
<div class="t" style="left:603.8px;top:514.3px;font-size:6.45px;color:#3a3a3a">Rozměr:</div>
<div class="t" style="left:603.8px;top:524.3px;font-size:6.45px;color:#3a3a3a">Facety:</div>
<div class="t" style="left:603.8px;top:534px;font-size:6.45px;color:#3a3a3a">Model OK:</div>
<div class="t" style="left:636.8px;top:514.3px;font-size:6.45px;color:#3a3a3a">64.43 x 52.67 x 36.50</div>
<div class="t" style="left:636.8px;top:524.3px;font-size:6.45px;color:#3a3a3a">428 (1 obalů)</div>
<div class="t" style="left:636.8px;top:534px;font-size:6.45px;color:#3a3a3a">Ano</div>
<div class="t" style="left:715.4px;top:514.3px;font-size:6.45px;color:#3a3a3a">Obsah:</div>
<div class="t" style="left:715.4px;top:524.3px;font-size:6.45px;color:#3a3a3a">Materiálů:</div>
<div class="t" style="left:747.8px;top:514.3px;font-size:6.45px;color:#3a3a3a">10345.69</div>
<div class="t" style="left:747.8px;top:524.3px;font-size:6.45px;color:#3a3a3a">1</div>

<div class="t" style="left:10.6px;top:518.2px;font-size:6.9px;color:#2f2f2f">Zobrazení</div>
<div class="combo" style="left:46px;top:516px;width:78px;height:9.3px;border:none;box-shadow:0 0 0.5px rgba(0,0,0,.3)"></div>
<div class="bluebtn" style="left:116.4px;top:516px;width:7.5px;height:9.3px;border-radius:0 2px 2px 0"></div>
<svg class="a" style="left:114px;top:514px" width="12" height="14" viewBox="114 514 12 14">
 <path d="M118.6,519.6 l1.6,-1.6 l1.6,1.6 M118.6,521.6 l1.6,1.6 l1.6,-1.6" fill="none" stroke="#fff" stroke-width="0.7"/>
</svg>
<div class="t" style="left:50px;top:518.3px;font-size:6.9px;color:#2f2f2f">Typ</div>
<div class="t gray" style="left:133.2px;top:518.5px;font-size:6.6px">Zobrazit</div>
<div class="a" style="left:164.7px;top:515px;width:88.9px;height:11.3px;background:#fff;border:1px solid #c9c9c9"></div>
<div class="t" style="left:167px;top:518.5px;font-size:6.6px;color:#c2c2c2">Typy extruzí</div>
<div class="a" style="left:256.2px;top:515.6px;width:10.2px;height:9.6px;background:#e4e4e4;border:0.5px solid #d4d4d4;border-radius:2px"></div>
<svg class="a" style="left:254px;top:514px" width="14" height="14" viewBox="254 514 14 14">
 <path d="M259.6,519.8 l1.6,1.5 l1.6,-1.5" fill="none" stroke="#9a9a9a" stroke-width="0.6"/>
</svg>
<div class="cbd" style="left:283.8px;top:517px;width:6.9px;height:7.5px"></div>
<div class="t gray" style="left:293px;top:518.2px;font-size:6.9px">Rychloposun</div>
<div class="cbd" style="left:346.2px;top:517px;width:6.9px;height:7.5px"></div>
<div class="t gray" style="left:355.3px;top:518.2px;font-size:6.9px">Retrakce</div>
<div class="cbd" style="left:396.4px;top:517px;width:6.9px;height:7.5px"></div>
<div class="t gray" style="left:405px;top:518.2px;font-size:6.9px">Deretrakce</div>
<div class="cbd" style="left:452.8px;top:517px;width:6.9px;height:7.5px"></div>
<div class="t gray" style="left:461px;top:518.2px;font-size:6.9px">Skořápky</div>
<!-- segmented -->
<div class="a" style="left:256.25px;top:533.1px;width:86.9px;height:10px;background:#fff;border-radius:2px;box-shadow:0 0 0.6px rgba(0,0,0,.35)"></div>
<div class="a" style="left:277.5px;top:533.1px;width:33.5px;height:10px;background:linear-gradient(#5c9df8,#2d70ef)"></div>
<div class="t" style="left:262.7px;top:535.6px;font-size:6.9px;color:#333">3D</div>
<div class="t" style="left:283px;top:535.6px;font-size:6.9px;color:#fff;font-weight:bold">Náhled</div>
<div class="t" style="left:317px;top:535.6px;font-size:6.9px;color:#333">Vrstvy</div>
<div class="a" style="left:0;top:552.8px;width:800px;height:4px;background:#f1f1f1;border-top:0.8px solid #dadada"></div>

</body></html>
